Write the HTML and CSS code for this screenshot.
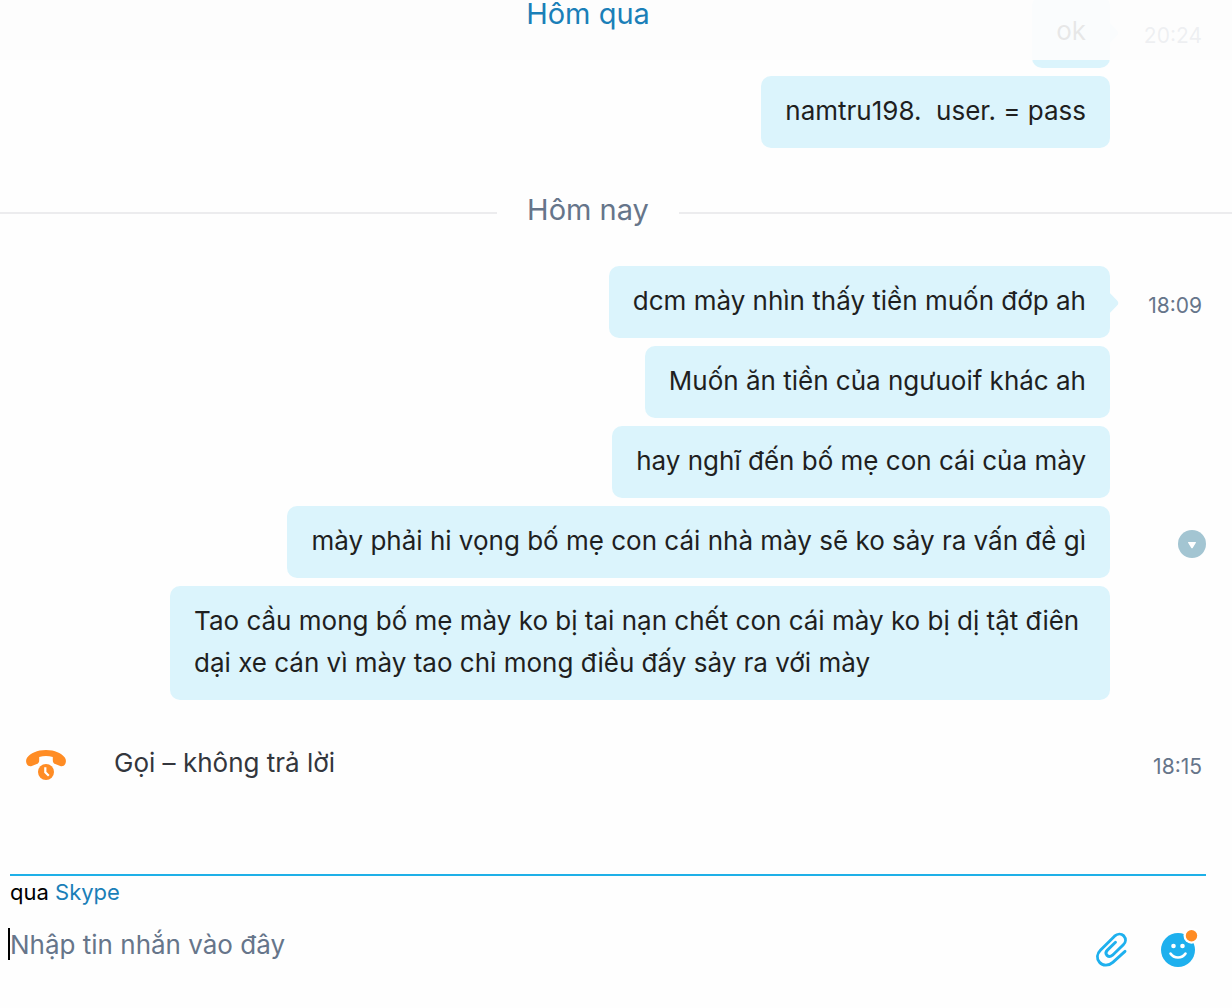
FILE: index.html
```
<!DOCTYPE html>
<html lang="vi">
<head>
  <meta charset="UTF-8">
  <meta name="viewport" content="width=device-width, initial-scale=1.0">
  <title>Skype</title>
  <link rel="stylesheet" href="styles.css">
</head>
<body>

  <header class="day-header">
    <a href="#yesterday" class="day-link">Hôm qua</a>
  </header>

  <main class="chat-log">
    <div class="message" id="yesterday">
      <p class="bubble bubble-first">ok</p>
      <div class="message-side"><time class="message-time">20:24</time></div>
    </div>
    <div class="message">
      <p class="bubble">namtru198.&nbsp; user. = pass</p>
      <div class="message-side"></div>
    </div>

    <div class="day-divider"><h2 class="day-title">Hôm nay</h2></div>

    <div class="message">
      <p class="bubble bubble-first">dcm mày nhìn thấy tiền muốn đớp ah</p>
      <div class="message-side"><time class="message-time">18:09</time></div>
    </div>
    <div class="message">
      <p class="bubble">Muốn ăn tiền của ngưuoif khác ah</p>
      <div class="message-side"></div>
    </div>
    <div class="message">
      <p class="bubble">hay nghĩ đến bố mẹ con cái của mày</p>
      <div class="message-side"></div>
    </div>
    <div class="message">
      <p class="bubble">mày phải hi vọng bố mẹ con cái nhà mày sẽ ko sảy ra vấn đề gì</p>
      <div class="message-side">
        <button type="button" class="menu-button" aria-label="Menu">
          <svg viewBox="0 0 28 28" width="28" height="28">
            <path d="M10.500 12h7a.5.5 0 0 1 .4.8l-3.200 5.100a.8.8 0 0 1-1.400 0l-3.200-5.100a.5.5 0 0 1 .4-.8z" fill="#fff"/>
          </svg>
        </button>
      </div>
    </div>
    <div class="message">
      <p class="bubble">Tao cầu mong bố mẹ mày ko bị tai nạn chết con cái mày ko bị dị tật điên dại xe cán vì mày tao chỉ mong điều đấy sảy ra với mày</p>
      <div class="message-side"></div>
    </div>

    <div class="call-event">
      <svg class="call-icon" viewBox="0 0 40 30" width="40" height="30">
        <path d="M20 0C11 0 4.500 3.200 1.200 7.500C-.2 9.500-.3 12 .8 14c1 2 3 2.700 5 2l5-2c1.800-.7 2.400-2 2.400-3.800V7c4.400-1.300 9.200-1.300 13.600 0v3.200c0 1.800.6 3.100 2.400 3.800l5 2c2 .7 4 0 5-2c1.100-2 1-4.500-.4-6.500C35.500 3.200 29 0 20 0z" fill="#ff8c24"/>
        <circle cx="20" cy="22" r="8" fill="#ff8c24"/>
        <path d="M19.300 17.300v5l3.500 3.500" fill="none" stroke="#fff" stroke-width="2.200"/>
      </svg>
      <span class="call-text">Gọi – không trả lời</span>
      <time class="message-time">18:15</time>
    </div>
  </main>

  <form class="composer">
    <p class="via">qua <a href="#skype" class="via-link">Skype</a></p>
    <div class="composer-row">
      <input type="text" class="composer-input" placeholder="Nhập tin nhắn vào đây" aria-label="Nhập tin nhắn vào đây">
      <button type="button" class="icon-button" aria-label="Attach">
        <svg viewBox="-2 -3 40 40" width="40" height="40">
          <path d="M31 20.300L18.800 31.300C14.500 35.200 8.700 34.900 5.500 31.200C2.400 27.600 2.900 22.700 6.400 19.200L20.500 5.200C23.500 2.500 27.300 2.400 29.800 4.900C32.200 7.500 31.900 11.200 29.300 13.800L18.500 24.200C16.700 25.800 14.400 25.800 13 24.400C11.600 22.900 11.800 20.700 13.400 19.100L21.500 11.300" fill="none" stroke="#1eb0ee" stroke-width="2.900" stroke-linecap="round"/>
        </svg>
      </button>
      <button type="button" class="icon-button" aria-label="Emoji">
        <svg viewBox="0 0 40 40" width="40" height="40">
          <circle cx="18" cy="22" r="17" fill="#1eb0ee"/>
          <circle cx="13.500" cy="18" r="2.300" fill="#fff"/>
          <circle cx="22.500" cy="18" r="2.300" fill="#fff"/>
          <path d="M10.500 25.500c3.500 5.400 11.500 5.400 15 0" fill="none" stroke="#fff" stroke-width="2.600" stroke-linecap="round"/>
          <circle cx="31.500" cy="7.700" r="8" fill="#fff"/>
          <circle cx="31.500" cy="7.700" r="5.700" fill="#ff8c24"/>
        </svg>
      </button>
    </div>
  </form>

</body>
</html>
```
FILE: styles.css
```
* {
  margin: 0;
  padding: 0;
  box-sizing: border-box;
}

body {
  font-family: Inter, "Noto Sans", sans-serif;
  font-size: 26px;
  background-color: #fefefe;
  color: #1f1f1f;
  display: flex;
  flex-direction: column;
  height: 100vh;
  overflow: hidden;
}

.day-header {
  position: absolute;
  top: 0;
  left: 0;
  right: 0;
  z-index: 1;
  height: 60px;
  padding-right: 56px;
  background-color: rgba(253, 253, 253, 0.9);
  text-align: center;
}

.day-link {
  display: block;
  font-size: 29px;
  line-height: 28px;
  color: #1a7fb8;
  text-decoration: none;
}

.chat-log {
  flex: 1;
  min-height: 0;
  display: flex;
  flex-direction: column;
  justify-content: flex-end;
  gap: 8px;
  padding-bottom: 74px;
  overflow: hidden;
}

.message {
  display: flex;
  justify-content: flex-end;
  flex-shrink: 0;
  padding-left: 170px;
}

.bubble {
  position: relative;
  padding: 14px 24px 16px;
  border-radius: 10px;
  background-color: #dbf4fc;
  line-height: 42px;
}

.bubble-first::after {
  content: "";
  position: absolute;
  top: 28px;
  right: -6px;
  width: 18px;
  height: 18px;
  border-radius: 4px;
  background-color: #dbf4fc;
  transform: rotate(45deg);
}

.message-side {
  flex: 0 0 122px;
  display: flex;
  align-items: center;
  justify-content: flex-end;
  padding: 4px 26px 0 0;
}

.message-time {
  padding: 2px 4px 0 0;
  font-size: 21px;
  color: #66758a;
}

.menu-button {
  width: 28px;
  height: 28px;
  border: none;
  border-radius: 50%;
  background-color: #a3c5d2;
  cursor: pointer;
}

.menu-button svg {
  display: block;
}

.day-divider {
  flex-shrink: 0;
  display: flex;
  align-items: center;
  gap: 30px;
  height: 102px;
  padding-top: 12px;
}

.day-divider::before,
.day-divider::after {
  content: "";
  flex: 1 1 0;
  border-top: 2px solid #ececee;
}

.day-divider::after {
  flex-basis: 56px;
}

.day-title {
  padding-bottom: 6px;
  font-size: 29px;
  font-weight: 400;
  line-height: 40px;
  color: #66758a;
}

.call-event {
  flex-shrink: 0;
  display: flex;
  align-items: center;
  height: 72px;
  margin-top: 20px;
  padding: 2px 26px 0;
  color: #33363d;
}

.call-icon {
  margin-right: 48px;
}

.call-text {
  flex: 1;
  padding-bottom: 6px;
}

.composer {
  flex-shrink: 0;
  height: 134px;
  margin: 0 26px 0 10px;
  border-top: 2px solid #1eb0e8;
}

.via {
  font-size: 22px;
  line-height: 32px;
  color: #000;
}

.via-link {
  color: #1a7fb8;
  text-decoration: none;
}

.composer-row {
  display: flex;
  align-items: flex-start;
  gap: 28px;
  margin: 20px 6px 0 -2px;
}

.composer-input {
  flex: 1;
  min-width: 0;
  height: 32px;
  border: none;
  border-left: 2px solid #000;
  outline: none;
  background: none;
  font: inherit;
  color: #1f1f1f;
}

.composer-input::placeholder {
  color: #66758a;
  opacity: 1;
}

.icon-button {
  border: none;
  background: none;
  cursor: pointer;
}

.icon-button svg {
  display: block;
}
```
